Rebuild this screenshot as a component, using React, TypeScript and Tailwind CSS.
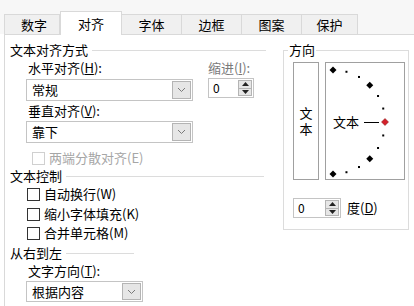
import React from "react";

const font = { fontFamily: '"Noto Sans CJK SC", "Noto Sans", sans-serif' };

const Chevron = () => (
  <svg width="9" height="6" viewBox="0 0 9 6">
    <path d="M1 1 L4.5 4.5 L8 1" fill="none" stroke="#7a7a7a" strokeWidth="1" />
  </svg>
);

const Select = ({ value, width }: { value: string; width: string }) => (
  <div className={`flex h-[22px] items-stretch border border-[#c4c4c4] bg-white ${width}`}>
    <div className="flex-1 pl-[5px] text-[13px] leading-[20px] text-black">{value}</div>
    <div className="m-[1px] flex w-[19px] items-center justify-center border border-[#b4b4b4] bg-[#e6e6e6]">
      <Chevron />
    </div>
  </div>
);

const Spin = ({ width }: { width: string }) => (
  <div className={`flex h-[20px] items-stretch border border-[#c4c4c4] bg-white ${width}`}>
    <div className="flex-1 pl-[4px] text-[12px] leading-[18px] text-black">0</div>
    <div className="m-[1px] flex w-[14px] flex-col border border-[#b4b4b4] bg-[#e6e6e6]">
      <div className="flex flex-1 items-center justify-center border-b border-[#b4b4b4]">
        <svg width="7" height="4" viewBox="0 0 7 4">
          <path d="M0 4 L3.5 0 L7 4 Z" fill="#222" />
        </svg>
      </div>
      <div className="flex flex-1 items-center justify-center">
        <svg width="7" height="4" viewBox="0 0 7 4">
          <path d="M0 0 L3.5 4 L7 0 Z" fill="#222" />
        </svg>
      </div>
    </div>
  </div>
);

const Heading = ({ text, lineWidth }: { text: string; lineWidth: string }) => (
  <div className="flex h-[18px] items-center text-[13px] leading-[18px] text-black">
    <span>{text}</span>
    <div className={`ml-[4px] h-px bg-[#dcdcdc] ${lineWidth}`} />
  </div>
);

const Check = ({ label, disabled }: { label: string; disabled?: boolean }) => (
  <div className={`flex h-[18px] items-center text-[13px] leading-[18px] ${disabled ? "text-[#a6a6a6]" : "text-black"}`}>
    <div className={`h-[13px] w-[13px] border bg-white ${disabled ? "border-[#d0d0d0]" : "border-[#333]"}`} />
    <span className="ml-[4px]">{label}</span>
  </div>
);

const tabs = ["数字", "对齐", "字体", "边框", "图案", "保护"];

const Dial = () => {
  const cx = 7;
  const cy = 59;
  const r = 52;
  const marks = [];
  for (let a = -90; a <= 90; a += 15) {
    const rad = (a * Math.PI) / 180;
    const x = cx + r * Math.cos(rad);
    const y = cy + r * Math.sin(rad);
    if (a === 0) {
      marks.push(<path key={a} d={`M${x - 3.5} ${y} L${x} ${y - 3.5} L${x + 3.5} ${y} L${x} ${y + 3.5} Z`} fill="#d4202a" stroke="#7a1010" strokeWidth="0.5" />);
    } else if (a % 45 === 0) {
      marks.push(<path key={a} d={`M${x - 3.5} ${y} L${x} ${y - 3.5} L${x + 3.5} ${y} L${x} ${y + 3.5} Z`} fill="#000" />);
    } else {
      marks.push(<rect key={a} x={x - 1} y={y - 1} width="2" height="2" fill="#000" />);
    }
  }
  return (
    <svg width="78" height="116" viewBox="0 0 78 116" className="overflow-visible">
      <text x="7" y="64" fontSize="13" fill="#000" style={font}>
        文本
      </text>
      <line x1="38" y1="59.5" x2="53" y2="59.5" stroke="#000" strokeWidth="1" />
      {marks}
    </svg>
  );
};

export default function App() {
  return (
    <div className="h-[306px] w-[414px] overflow-hidden bg-white" style={font}>
      <div className="flex h-[34px] items-end bg-[#f7f7f7] pl-[4px]">
        {tabs.map((t, i) =>
          i === 1 ? (
            <div
              key={t}
              className="relative z-10 -mb-px flex h-[24px] w-[62px] items-center justify-center border border-b-0 border-[#d9d9d9] bg-white text-[13px] text-black"
            >
              {t}
            </div>
          ) : (
            <div
              key={t}
              className={`flex h-[20px] items-center justify-center border-t border-r border-[#d9d9d9] bg-[#f0f0f0] text-[13px] text-black ${i === 0 ? "w-[56px] border-l pl-[4px]" : i === 5 ? "w-[56px]" : "w-[60px]"}`}
            >
              {t}
            </div>
          )
        )}
      </div>
      <div className="ml-[4px] flex h-[272px] border-l border-t border-[#d9d9d9]">
        <div className="w-[278px] pl-[5px] pt-[6px]">
          <Heading text="文本对齐方式" lineWidth="w-[174px]" />
          <div className="flex pl-[16px]">
            <div className="w-[167px]">
              <div className="h-[18px] pl-[2px] text-[13px] leading-[18px] text-black">水平对齐(<u>H</u>):</div>
              <div className="mt-[2px]">
                <Select value="常规" width="w-[167px]" />
              </div>
              <div className="mt-[1px] h-[18px] pl-[2px] text-[13px] leading-[18px] text-black">垂直对齐(<u>V</u>):</div>
              <div className="mt-[1px]">
                <Select value="靠下" width="w-[167px]" />
              </div>
            </div>
            <div className="ml-[15px]">
              <div className="h-[18px] text-[13px] leading-[18px] text-[#7a7a7a]">缩进(<u>I</u>):</div>
              <div className="mt-[1px]">
                <Spin width="w-[46px]" />
              </div>
            </div>
          </div>
          <div className="mt-[6px] pl-[22px]">
            <Check label="两端分散对齐(E)" disabled />
          </div>
          <Heading text="文本控制" lineWidth="w-[198px]" />
          <div className="pl-[17px]">
            <Check label="自动换行(W)" />
            <div className="mt-[2px]">
              <Check label="缩小字体填充(K)" />
            </div>
            <div className="mt-[1px]">
              <Check label="合并单元格(M)" />
            </div>
          </div>
          <div className="mt-[2px]">
            <Heading text="从右到左" lineWidth="w-[68px]" />
          </div>
          <div className="pl-[16px]">
            <div className="h-[18px] pl-[2px] text-[13px] leading-[18px] text-black">文字方向(<u>T</u>):</div>
            <div className="mt-[1px]">
              <Select value="根据内容" width="w-[117px] !h-[21px]" />
            </div>
          </div>
        </div>
        <div className="pt-[15px]">
          <div className="relative h-[180px] w-[126px] border border-[#dcdcdc]">
            <div className="absolute -top-[10px] left-[4px] bg-white px-px text-[13px] leading-[18px] text-black">方向</div>
            <div className="ml-[9px] mt-[11px] flex gap-[6px]">
              <div className="flex h-[118px] w-[26px] items-center justify-center border border-[#a0a0a0] text-[13px] leading-[16px] text-black">
                <span className="w-[13px] break-all">文本</span>
              </div>
              <div className="h-[118px] w-[80px] border border-[#a0a0a0]">
                <Dial />
              </div>
            </div>
            <div className="ml-[9px] mt-[18px] flex items-center">
              <Spin width="w-[48px]" />
              <span className="ml-[6px] text-[13px] text-black">度(<u>D</u>)</span>
            </div>
          </div>
        </div>
      </div>
    </div>
  );
}
